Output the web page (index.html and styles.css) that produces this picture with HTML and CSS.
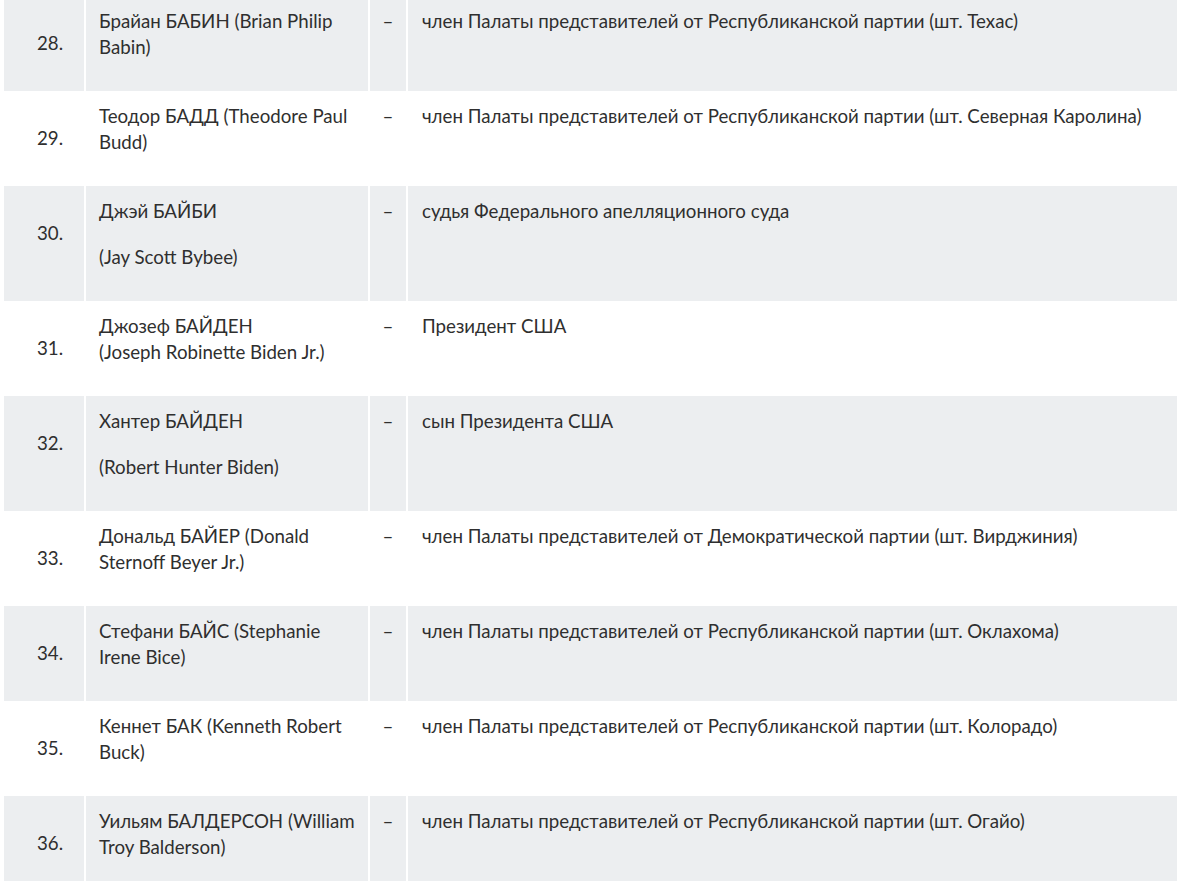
FILE: index.html
```html
<!DOCTYPE html>
<html lang="ru">
<head>
<meta charset="utf-8">
<title>Список</title>
<link rel="stylesheet" href="styles.css">
</head>
<body>
<table class="list">
  <colgroup>
    <col class="c-num"><col class="c-name"><col class="c-dash"><col class="c-desc">
  </colgroup>
  <tbody>
    <tr class="odd">
      <td class="num">28.</td>
      <td class="name"><p>Брайан БАБИН (Brian Philip<br>Babin)</p></td>
      <td class="dash"><p>–</p></td>
      <td class="desc"><p>член Палаты представителей от Республиканской партии (шт. Техас)</p></td>
    </tr>
    <tr>
      <td class="num">29.</td>
      <td class="name"><p>Теодор БАДД (Theodore Paul<br>Budd)</p></td>
      <td class="dash"><p>–</p></td>
      <td class="desc"><p>член Палаты представителей от Республиканской партии (шт. Северная Каролина)</p></td>
    </tr>
    <tr class="odd">
      <td class="num">30.</td>
      <td class="name"><p>Джэй БАЙБИ</p><p>(Jay Scott Bybee)</p></td>
      <td class="dash"><p>–</p></td>
      <td class="desc"><p>судья Федерального апелляционного суда</p></td>
    </tr>
    <tr>
      <td class="num">31.</td>
      <td class="name"><p>Джозеф БАЙДЕН<br>(Joseph Robinette Biden Jr.)</p></td>
      <td class="dash"><p>–</p></td>
      <td class="desc"><p>Президент США</p></td>
    </tr>
    <tr class="odd">
      <td class="num">32.</td>
      <td class="name"><p>Хантер БАЙДЕН</p><p>(Robert Hunter Biden)</p></td>
      <td class="dash"><p>–</p></td>
      <td class="desc"><p>сын Президента США</p></td>
    </tr>
    <tr>
      <td class="num">33.</td>
      <td class="name"><p>Дональд БАЙЕР (Donald<br>Sternoff Beyer Jr.)</p></td>
      <td class="dash"><p>–</p></td>
      <td class="desc"><p>член Палаты представителей от Демократической партии (шт. Вирджиния)</p></td>
    </tr>
    <tr class="odd">
      <td class="num">34.</td>
      <td class="name"><p>Стефани БАЙС (Stephanie<br>Irene Bice)</p></td>
      <td class="dash"><p>–</p></td>
      <td class="desc"><p>член Палаты представителей от Республиканской партии (шт. Оклахома)</p></td>
    </tr>
    <tr>
      <td class="num">35.</td>
      <td class="name"><p>Кеннет БАК (Kenneth Robert<br>Buck)</p></td>
      <td class="dash"><p>–</p></td>
      <td class="desc"><p>член Палаты представителей от Республиканской партии (шт. Колорадо)</p></td>
    </tr>
    <tr class="odd">
      <td class="num">36.</td>
      <td class="name"><p>Уильям БАЛДЕРСОН (William<br>Troy Balderson)</p></td>
      <td class="dash"><p>–</p></td>
      <td class="desc"><p>член Палаты представителей от Республиканской партии (шт. Огайо)</p></td>
    </tr>
  </tbody>
</table>
</body>
</html>
```
FILE: styles.css
```css
html, body {
  margin: 0;
  padding: 0;
  background: #ffffff;
}

body {
  font-family: "Lato", "Noto Sans", sans-serif;
  font-size: 18.7px;
  line-height: 26px;
  color: #2f2f2f;
  overflow: hidden;
}

.list {
  table-layout: fixed;
  border-collapse: separate;
  border-spacing: 2px 0;
  width: 1177px;
  margin: -4px 0 0 2px;
}

.c-num { width: 80px; }
.c-name { width: 282px; }
.c-dash { width: 36px; }
.c-desc { width: 769px; }

.list td {
  padding: 12px 13px 11px 13px;
  vertical-align: top;
  box-sizing: border-box;
}

.list tr {
  background: #ffffff;
}

.list tr.odd td {
  background: #eceef0;
}

.list p {
  margin: 0 0 20px 0;
}

.list td.name p {
  white-space: nowrap;
}

.list td.num {
  text-align: center;
  padding: 34px 0 11px 12px;
}

.list td.dash {
  text-align: center;
  padding-left: 0;
  padding-right: 0;
}

.list td.desc {
  padding-left: 14px;
}
```
